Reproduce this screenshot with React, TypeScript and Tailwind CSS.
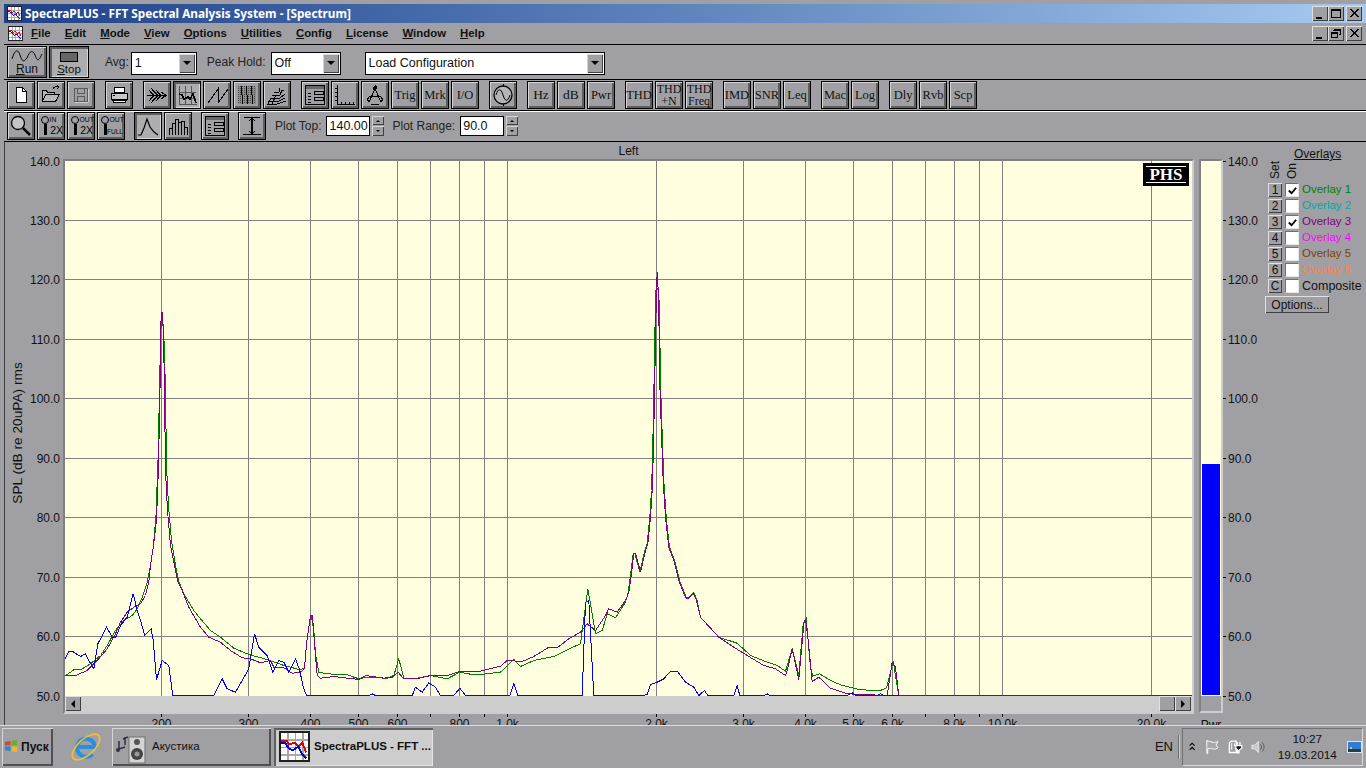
import type { ReactNode } from 'react';

const FACE = 'bg-[#a0a0a4]';
const RAISED = 'border border-black bg-[#a0a0a4] shadow-[inset_1px_1px_0_#d6d6d6,inset_-2px_-2px_0_#5e5e5e]';
const PRESSED = 'border border-black bg-[#adadb0] shadow-[inset_2px_2px_0_#5e5e5e,inset_-1px_-1px_0_#d6d6d6]';

type P = [number, number];
const z4 = (a: P[]): P[] => a.map(([x, y]) => [x / 3, 580 + y / 3]);
const z5 = (a: P[]): P[] => a.map(([x, y]) => [480 + x / 3, 580 + y / 3]);
const z8 = (a: P[]): P[] => a.map(([x, y]) => [600 + x / 3, 260 + y / 3]);
const line = (a: P[]) => a.map(([x, y]) => `${x.toFixed(1)},${y.toFixed(1)}`).join(' ');

const peak2: P[] = [[85, 995], [92, 945], [100, 880], [105, 878], [120, 935], [135, 870], [142, 850], [150, 770], [155, 690], [158, 590], [162, 410], [165, 230], [168, 90], [170, 35], [172, 60], [175, 150], [178, 370], [183, 520], [188, 660], [195, 770], [205, 860], [220, 900], [235, 960], [255, 1010], [262, 1015], [278, 997], [288, 1020]];
// green sits a hair outside the purple on the skirts, and tops out lower
const peak2Green: P[] = peak2.map(([x, y]): P => [x < 170 ? x - 2 : x + 2, Math.max(y, 85)]);

const blue: P[] = [
  ...z4([[192, 238], [205, 212], [215, 212], [240, 228], [255, 220], [268, 245], [280, 265], [292, 190], [300, 175], [318, 140], [335, 170], [345, 172], [360, 135], [380, 110], [398, 40], [410, 90], [420, 120], [433, 165], [452, 145], [458, 180], [468, 297], [485, 240], [505, 255], [517, 345], [640, 345], [665, 295], [680, 325], [705, 335], [725, 300], [745, 265], [762, 160], [775, 200], [800, 225], [817, 275], [835, 240], [850, 245], [865, 275], [885, 235], [898, 270], [908, 320], [918, 345], [1105, 345], [1115, 340], [1125, 345], [1235, 345], [1245, 320], [1265, 335], [1285, 307], [1305, 320], [1320, 345], [1360, 345], [1378, 323], [1395, 345]]),
  ...z5([[88, 345], [100, 310], [112, 345], [305, 345], [315, 65], [325, 60], [340, 345], [485, 345], [500, 342], [510, 312], [530, 305], [550, 295], [570, 272], [590, 272], [615, 305], [640, 320], [655, 345], [672, 330], [682, 345], [760, 345], [770, 315], [778, 345], [850, 345], [860, 340], [868, 345], [1100, 345], [1115, 337], [1127, 345], [1190, 345], [1200, 340], [1212, 345], [1255, 345]]),
];

const green: P[] = [
  ...z4([[192, 288], [220, 268], [240, 268], [270, 250], [300, 225], [320, 195], [345, 150], [370, 120], [395, 105], [410, 85], [425, 50], [440, 5]]),
  [150, 565], [153, 545], [155.5, 515], [157.5, 460], [159, 390], [160, 340], [161, 318], [162, 318], [163.5, 340], [165, 390], [166, 465], [168, 505], [171, 540], [175, 565], [178, 580],
  ...z4([[550, 40], [580, 90], [600, 115], [630, 150], [660, 170], [700, 203], [745, 222], [800, 237], [850, 255], [900, 268], [912, 262], [918, 190], [928, 120], [932, 105], [940, 150], [945, 220], [955, 275], [980, 280], [1040, 283], [1075, 295], [1100, 290], [1160, 293], [1180, 285], [1195, 235], [1210, 293], [1250, 293], [1290, 285], [1340, 295], [1378, 275], [1420, 283], [1440, 282]]),
  ...z5([[60, 275], [100, 237], [120, 258], [160, 240], [220, 228], [260, 208], [300, 190], [312, 100], [322, 25], [335, 100], [345, 160], [365, 150], [380, 100], [405, 112], [435, 65]]),
  ...z8(peak2Green),
  ...z5([[660, 110], [715, 170], [770, 188], [810, 225], [860, 245], [890, 255], [915, 272], [935, 205], [955, 285], [968, 130], [977, 115], [990, 260], [997, 287], [1017, 280], [1050, 300], [1080, 313], [1140, 328], [1200, 330], [1218, 322], [1238, 243], [1255, 345]]),
  [1191, 695],
];

const purple: P[] = [
  ...z4([[192, 285], [225, 285], [260, 270], [290, 240], [320, 205], [345, 160], [360, 125], [380, 95], [400, 80], [420, 70], [435, 45], [445, 5]]),
  [150, 565], [153, 545], [156, 520], [158, 465], [159.5, 390], [160, 330], [161, 312], [162, 312], [163, 335], [164, 390], [165, 470], [167, 510], [170, 545], [174, 565], [177, 580],
  ...z4([[545, 30], [565, 80], [600, 140], [625, 170], [660, 185], [690, 210], [725, 232], [750, 235], [780, 247], [810, 240], [820, 260], [850, 262], [875, 278], [900, 275], [912, 265], [918, 190], [930, 105], [936, 105], [942, 190], [950, 285], [960, 293], [1000, 288], [1075, 297], [1095, 285], [1150, 293], [1175, 290], [1193, 275], [1210, 295], [1250, 295], [1290, 285], [1340, 285], [1380, 272], [1440, 272]]),
  ...z5([[60, 257], [80, 240], [125, 243], [160, 228], [205, 200], [230, 202], [265, 175], [300, 155], [320, 130], [345, 150], [375, 105], [385, 85], [410, 95], [435, 60]]),
  ...z8(peak2),
  ...z5([[660, 110], [715, 170], [760, 200], [800, 225], [850, 255], [885, 265], [915, 285], [920, 270], [935, 205], [955, 297], [970, 130], [975, 115], [982, 170], [995, 303], [1015, 290], [1050, 323], [1100, 340], [1220, 345], [1235, 245], [1245, 260], [1255, 345]]),
  [1191, 695],
];

const yTicks: [string, number][] = [['140.0', 161], ['130.0', 220], ['120.0', 279], ['110.0', 339], ['100.0', 398], ['90.0', 458], ['80.0', 517], ['70.0', 577], ['60.0', 636], ['50.0', 696]];
const xGrid = [161, 248, 310, 358, 397, 430, 459, 484, 507, 656, 743, 805, 853, 892, 925, 954, 979, 1002, 1151];
const xLabels: [string, number][] = [['200', 161], ['300', 248], ['400', 310], ['500', 358], ['600', 397], ['800', 459], ['1.0k', 507], ['2.0k', 656], ['3.0k', 743], ['4.0k', 805], ['5.0k', 853], ['6.0k', 892], ['8.0k', 954], ['10.0k', 1002], ['20.0k', 1151]];

function Ico({ children }: { children: ReactNode }) {
  return (
    <svg viewBox="0 0 26 26" className="w-full h-full" fill="none" stroke="#000" strokeWidth="1" shapeRendering="crispEdges">
      {children}
    </svg>
  );
}

const panelIcon = (
  <Ico>
    <rect x="3.5" y="3.5" width="19" height="19" fill="#a0a0a4" />
    <rect x="4" y="4" width="18" height="3" fill="#666" stroke="none" />
    <path d="M12.5 9.5h9v3h-9zM12.5 15.5h9v3h-9zM6 11h3M6 14h3M6 17h3M6 20h3" />
  </Ico>
);

const TxtIco = ({ top, bottom, bottomSize }: { top: string; bottom: string; bottomSize: number }) => (
  <Ico>
    <circle cx="7" cy="7" r="3.5" shapeRendering="auto" />
    <path d="M7 11v11M8 11v11" strokeWidth="1.3" />
    <text x="11.5" y="9" fontSize="6.8" fill="#000" stroke="none" fontFamily="Liberation Sans" shapeRendering="auto">{top}</text>
    <text x="25" y="21" textAnchor="end" fontSize={bottomSize} fill="#000" stroke="none" fontFamily="Liberation Sans" shapeRendering="auto">{bottom}</text>
  </Ico>
);

type Tool = { icon?: ReactNode; text?: string; sub?: string; pressed?: boolean };

const row2: Tool[][] = [
  [
    { icon: <Ico><path d="M8.5 5.5h6l4 4v11h-10z" fill="#fff" /><path d="M14.5 5.5v4h4" /></Ico> },
    { icon: <Ico><path d="M4.5 8.5h4l1 2h7v2h-9l-3 7zM4.5 19.5h13l4-7h-14" fill="#b8b8b8" /><path d="M15 7c1-3 4-3 6-2M19 3l2 2-2 2" /></Ico> },
    { icon: <Ico><g stroke="#5a5a5a"><rect x="6.5" y="6.5" width="13" height="13" /><rect x="9.5" y="6.5" width="7" height="5" /><rect x="9.5" y="14.5" width="7" height="5" /></g><path d="M7 20.5h13M20.5 7v13" stroke="#d0d0d0" /></Ico> },
  ],
  [
    { icon: <Ico><rect x="8.5" y="5.5" width="10" height="5" fill="#fff" /><path d="M5.5 11.5h16v6h-16z" fill="#c8c8c8" /><rect x="7.5" y="17.5" width="12" height="3" fill="#fff" /><path d="M7 13.5h2" /><path d="M6 18h15" strokeWidth="2" /></Ico> },
  ],
  [
    { icon: <Ico><path d="M3 13.5h20M5 8l5 5.5L5 19M7 6l7 7.5L7 21M12 8l5 5.5-5 5.5M17 10l5 3.5-5 3.5" strokeWidth="1.2" /></Ico> },
    { pressed: true, icon: <Ico><path d="M5.5 4v18.5H23M5 10.5h17M5 16.5h17M11.5 4v18M17.5 4v18" stroke="#555" /><path d="M5 12l3 1 2 4 4-2 2 2 3-5 3 9" strokeWidth="1.6" /></Ico> },
    { icon: <Ico><path d="M4 21L14 7v14L24 7" /></Ico> },
    {
      icon: (
        <Ico>
          <defs>
            <pattern id="dither" width="2" height="2" patternUnits="userSpaceOnUse">
              <rect width="2" height="2" fill="#8c8c90" stroke="none" />
              <rect width="1" height="1" fill="#4c4c4c" stroke="none" />
            </pattern>
          </defs>
          <rect x="4" y="4" width="18" height="18" fill="url(#dither)" stroke="none" />
          <path d="M7 4c3 4-2 6 1 9s-2 6 1 9M12 4c3 4-2 6 1 9s-2 6 1 9M17 4c3 4-2 6 1 9s-2 6 1 9" />
        </Ico>
      ),
    },
    { icon: <Ico><path d="M3 22h10l9-3M4 19h11l6-3M6 16h10l5-4M8 13h8l2-5 2 1M10 10h5l1-4M4 22l3-6M8 22l4-9" /></Ico> },
  ],
  [
    { icon: panelIcon },
    { icon: <Ico><path d="M5.5 3v19.5H23M3 6h3M3 10h3M3 14h3M3 18h3M9 20v3M13 20v3M17 20v3M21 20v3" /></Ico> },
    { icon: <Ico><path d="M13 3v4M13 7L7 20M13 7l6 13M8 14h10M7 20c-3-3 0-6 3-6M19 20c3-3 0-6-3-6M9 22c3 1 5 1 8 0" /><circle cx="13" cy="6" r="1.5" fill="#000" /></Ico> },
    { text: 'Trig' },
    { text: 'Mrk' },
    { text: 'I/O' },
  ],
  [
    { icon: <Ico><circle cx="13" cy="13" r="9" fill="#b4b4b6" strokeWidth="1.3" shapeRendering="auto" /><path d="M13 2v2M13 22v2" /><path d="M6 13c2-7 5-7 7 0s5 7 7 0" shapeRendering="auto" /></Ico> },
  ],
  [{ text: 'Hz' }, { text: 'dB' }, { text: 'Pwr' }],
  [{ text: 'THD' }, { text: 'THD', sub: '+N' }, { text: 'THD', sub: 'Freq' }],
  [{ text: 'IMD' }, { text: 'SNR' }, { text: 'Leq' }],
  [{ text: 'Mac' }, { text: 'Log' }],
  [{ text: 'Dly' }, { text: 'Rvb' }, { text: 'Scp' }],
];

const row3: Tool[][] = [
  [
    { icon: <Ico><circle cx="10" cy="10" r="6.5" fill="#c4c4c6" strokeWidth="1.3" shapeRendering="auto" /><path d="M15 15l7 7" strokeWidth="2.5" shapeRendering="auto" /></Ico> },
    { icon: <TxtIco top="IN" bottom="2X" bottomSize={10.5} /> },
    { icon: <TxtIco top="OUT" bottom="2X" bottomSize={10.5} /> },
    { icon: <TxtIco top="OUT" bottom="FULL" bottomSize={6.5} /> },
  ],
  [
    { pressed: true, icon: <Ico><path d="M3 22h3l3-7 3-9 3 8 4 5 4 3" strokeWidth="1.2" shapeRendering="auto" /></Ico> },
    { icon: <Ico><path d="M4 22v-7h3v7M7 22V10h3v12M10 22V6h3v16M13 22V9h3v13M16 22V8h3v14M19 22v-8h3v8" /></Ico> },
  ],
  [{ icon: panelIcon }],
  [
    { icon: <Ico><path d="M5 4.5h16M4 21.5h18M13 5v16M10 8l3-3 3 3M10 18l3 3 3-3" strokeWidth="1.2" /></Ico> },
  ],
];

function ToolBtn({ tool }: { tool: Tool }) {
  return (
    <div className={`w-[28px] h-[28px] flex flex-col items-center justify-center overflow-hidden shrink-0 ${tool.pressed ? PRESSED : RAISED}`}>
      {tool.icon}
      {tool.text && (
        <span className={`[font-family:'Liberation_Serif',serif] text-[#111] whitespace-nowrap ${tool.sub ? 'text-[12px] leading-[12px]' : tool.text.length > 2 ? 'text-[12.5px] leading-[14px]' : 'text-[13.5px] leading-[14px]'}`}>
          {tool.text}
        </span>
      )}
      {tool.sub && <span className="[font-family:'Liberation_Serif',serif] text-[#111] text-[12px] leading-[12px]">{tool.sub}</span>}
    </div>
  );
}

function SpectraIcon({ size }: { size: string }) {
  return (
    <svg viewBox="0 0 16 16" className={size} shapeRendering="crispEdges">
      <rect x="0" y="0" width="16" height="16" fill="#202020" />
      <rect x="1" y="1" width="14" height="14" fill="#fff" />
      <path d="M4.5 1v14M8.5 1v14M12.5 1v14M1 4.5h14M1 8.5h14M1 12.5h14" stroke="#a8a8a8" />
      <path d="M1 5h3l1 2 3-1 2 2 2-2 2 5" stroke="#e00000" fill="none" />
      <path d="M1 6h2l2 3 2 1 3-2 2 4 2 2" stroke="#0000e0" fill="none" />
    </svg>
  );
}

function WinBtn({ kind }: { kind: 'min' | 'max' | 'restore' | 'close' }) {
  return (
    <div className="w-[16px] h-[15px] bg-[#a0a0a4] shadow-[inset_1px_1px_0_#e0e0e0,inset_-1px_-1px_0_#404040]">
      <svg viewBox="0 0 16 15" className="w-full h-full" fill="none" stroke="#000" shapeRendering="crispEdges">
        {kind === 'min' && <path d="M4 11.5h6" strokeWidth="2" />}
        {kind === 'max' && <path d="M3.5 3.5h9v8h-9zM3 4.5h10" />}
        {kind === 'restore' && <path d="M5.5 3.5h7v5h-2M3.5 6.5h6v5h-6zM3 7.5h7M5 4.5h8" />}
        {kind === 'close' && <path d="M4 3l8 8M5 3l8 8M12 3l-8 8M13 3l-8 8" strokeWidth="1.2" />}
      </svg>
    </div>
  );
}

function Select({ text, w }: { text: string; w: string }) {
  return (
    <div className={`${w} h-[23px] border border-black bg-white flex items-center justify-between shrink-0`}>
      <span className="pl-[3px] text-[12.5px] text-[#111]">{text}</span>
      <div className="w-[16px] h-[19px] mr-[1px] bg-[#a0a0a4] shadow-[inset_1px_1px_0_#d6d6d6,inset_-1px_-1px_0_#404040] flex items-center justify-center">
        <div className="w-0 h-0 border-x-[4px] border-x-transparent border-t-[4px] border-t-black" />
      </div>
    </div>
  );
}

function Spin({ text, w }: { text: string; w: string }) {
  return (
    <div className="flex items-center gap-[2px]">
      <div className={`${w} h-[20px] border border-black bg-white flex items-center pl-[2px] text-[12.5px] text-[#111]`}>{text}</div>
      <div className="w-[12px] flex flex-col gap-[1px]">
        <div className="h-[9px] bg-[#a0a0a4] shadow-[inset_1px_1px_0_#d6d6d6,inset_-1px_-1px_0_#404040] flex items-center justify-center">
          <div className="w-0 h-0 border-x-[2px] border-x-transparent border-b-[2px] border-b-black" />
        </div>
        <div className="h-[10px] bg-[#a0a0a4] shadow-[inset_1px_1px_0_#d6d6d6,inset_-1px_-1px_0_#404040] flex items-center justify-center">
          <div className="w-0 h-0 border-x-[2px] border-x-transparent border-t-[2px] border-t-black" />
        </div>
      </div>
    </div>
  );
}

function ScrollBtn({ dir }: { dir: 'l' | 'r' | 'none' }) {
  return (
    <div className="w-[16px] h-[15px] bg-[#a0a0a4] shadow-[inset_1px_1px_0_#e0e0e0,inset_-1px_-1px_0_#404040] flex items-center justify-center">
      {dir === 'l' && <div className="w-0 h-0 border-y-[4px] border-y-transparent border-r-[4px] border-r-black" />}
      {dir === 'r' && <div className="w-0 h-0 border-y-[4px] border-y-transparent border-l-[4px] border-l-black" />}
    </div>
  );
}

function Plot() {
  return (
    <div className="relative w-[1131px] border-2 border-t-[#808080] border-l-[#808080] border-r-[#cdcdcd] border-b-[#cdcdcd] bg-[#cdcdcd]">
      <svg viewBox="65 161 1127 535" className="block w-[1127px] h-[535px] bg-[#ffffe0]" shapeRendering="crispEdges">
        {xGrid.map(x => <line key={x} x1={x + 0.5} x2={x + 0.5} y1="161" y2="696" stroke="#808080" />)}
        {yTicks.slice(1, 9).map(([l, y]) => <line key={l} x1="65" x2="1192" y1={y + 0.5} y2={y + 0.5} stroke="#808080" />)}
        <g transform="translate(0.5 0.5)" fill="none">
          <polyline points={line(green)} stroke="#008000" />
          <polyline points={line(purple)} stroke="#800080" />
          <polyline points={line(blue)} stroke="#0000ff" />
        </g>
      </svg>
      <div className="h-[16px] flex items-start justify-between pr-[1px]">
        <ScrollBtn dir="l" />
        <div className="flex">
          <ScrollBtn dir="none" />
          <ScrollBtn dir="r" />
        </div>
      </div>
      {/* PHS badge */}
      <div className="absolute right-[3px] top-[2px] w-[46px] h-[23px] bg-black flex items-center justify-center">
        <span className="border-y border-white [font-family:'Liberation_Serif',serif] font-bold text-white text-[17px] leading-[15px] px-[3px]">PHS</span>
      </div>
    </div>
  );
}

function Meter() {
  return (
    <div className="w-[24px] h-[554px] border-2 border-t-[#808080] border-l-[#808080] border-r-[#cdcdcd] border-b-[#cdcdcd] flex flex-col">
      <div className="h-[303px] bg-[#ffffe0]" />
      <div className="h-[232px] px-[1px] pb-[1px] bg-[#ffffe0]">
        <div className="h-full bg-[#0000ff]" />
      </div>
    </div>
  );
}

const overlays: [string, string, string, boolean][] = [
  ['1', 'Overlay 1', 'text-[11.5px] text-[#008000]', true],
  ['2', 'Overlay 2', 'text-[11.5px] text-[#00a8a8]', false],
  ['3', 'Overlay 3', 'text-[11.5px] text-[#800080]', true],
  ['4', 'Overlay 4', 'text-[11.5px] text-[#ff00ff]', false],
  ['5', 'Overlay 5', 'text-[11.5px] text-[#804000]', false],
  ['6', 'Overlay 6', 'text-[11.5px] text-[#ff8040]', false],
  ['C', 'Composite', 'text-[12.5px] text-[#111]', false],
];

function OverlayPanel() {
  return (
    <div className="flex-1 pt-[6px] text-[12px] text-[#111]">
      <div className="pl-[29px] leading-[12px] underline">Overlays</div>
      <div className="flex h-[18px] mt-[1px] pl-[5px] gap-[6px] items-end leading-[11px]">
        <span className="[writing-mode:vertical-rl] rotate-180">Set</span>
        <span className="[writing-mode:vertical-rl] rotate-180">On</span>
      </div>
      <div className="mt-[4px] pl-[3px] flex flex-col gap-[2px]">
        {overlays.map(([n, label, color, on]) => (
          <div key={n} className="flex items-center h-[14px]">
            <div className="w-[14px] h-[14px] bg-[#a0a0a4] shadow-[inset_1px_1px_0_#e0e0e0,inset_-1px_-1px_0_#404040] flex items-center justify-center text-[12px] leading-none">{n}</div>
            <div className="ml-[3px] w-[14px] h-[14px] bg-white border border-t-[#707070] border-l-[#707070] border-r-[#e8e8e8] border-b-[#e8e8e8] flex items-center justify-center">
              {on && (
                <svg viewBox="0 0 12 12" className="w-[11px] h-[11px]" fill="none" stroke="#000" strokeWidth="2">
                  <path d="M2 6l3 3 5-6" />
                </svg>
              )}
            </div>
            <span className={`ml-[3px] whitespace-nowrap ${color}`}>{label}</span>
          </div>
        ))}
      </div>
      <div className="mt-[3px] w-[64px] h-[17px] bg-[#a0a0a4] shadow-[inset_1px_1px_0_#e0e0e0,inset_-1px_-1px_0_#404040] flex items-center justify-center">Options...</div>
    </div>
  );
}

function Taskbar() {
  return (
    <div className={`h-[42px] border-t border-[#dcdcdc] ${FACE} flex items-center text-[11.5px] text-[#111]`}>
      <div className="ml-[2px] w-[51px] h-[38px] shadow-[inset_1px_1px_0_#d6d6d6,inset_-2px_-2px_0_#505050] flex items-center pl-[2px] gap-[2px] font-bold text-[12px]">
        <svg viewBox="0 0 16 16" className="w-[15px] h-[15px]">
          <path d="M1 3l6-1v5H1z" fill="#d8482a" />
          <path d="M8 2l6-1v6H8z" fill="#6cab2c" />
          <path d="M1 8h6v5l-6-1z" fill="#2f86d8" />
          <path d="M8 8h6v6l-6-1z" fill="#f0b828" />
        </svg>
        Пуск
      </div>
      <div className="ml-[18px] w-[30px] h-[30px]">
        <svg viewBox="0 0 30 30" className="w-full h-full overflow-visible" fill="none">
          <path d="M6 15h18a9 9 0 1 0-2.5 7" stroke="#2a8fe0" strokeWidth="4" />
          <ellipse cx="15" cy="15" rx="17" ry="8" transform="rotate(-42 15 15)" stroke="#f0c030" strokeWidth="1.6" />
        </svg>
      </div>
      <div className="ml-[11px] w-[159px] h-[38px] shadow-[inset_1px_1px_0_#d6d6d6,inset_-2px_-2px_0_#505050] flex items-center">
        <svg viewBox="0 0 36 36" className="w-[36px] h-[36px] ml-[3px]">
          <path d="M4 20l6-2M8 10l5-2M4 20v-8M10 16V8" stroke="#303040" strokeWidth="1.5" fill="none" />
          <circle cx="3" cy="21" r="2" fill="#303040" />
          <rect x="14" y="8" width="16" height="26" fill="#d4d4d4" stroke="#707070" />
          <circle cx="22" cy="13" r="3" fill="#555" />
          <circle cx="22" cy="25" r="6" fill="#444" />
          <circle cx="22" cy="25" r="2.5" fill="#999" />
        </svg>
        <span className="ml-[1px]">Акустика</span>
      </div>
      <div className="ml-[3px] w-[159px] h-[38px] bg-[#cdcdcd] shadow-[inset_2px_2px_0_#606060,inset_-1px_-1px_0_#e4e4e4] flex items-center pl-[5px]">
        <SpectraIcon size="w-[31px] h-[31px] shrink-0" />
        <span className="ml-[4px] font-bold whitespace-nowrap">SpectraPLUS - FFT ...</span>
      </div>
      <div className="flex-1" />
      <span className="text-[13px]">EN</span>
      <div className="ml-[5px] w-[2px] h-[24px] bg-[#c8c8c8] border-l border-[#707070]" />
      <div className="ml-[2px] mr-[3px] w-[181px] h-[38px] border border-t-[#707070] border-l-[#707070] border-r-[#d8d8d8] border-b-[#d8d8d8] flex items-center">
        <svg viewBox="0 0 10 10" className="ml-[5px] w-[9px] h-[9px]" fill="none" stroke="#000" strokeWidth="1.4">
          <path d="M2 4l3-3 3 3M2 9l3-3 3 3" />
        </svg>
        <svg viewBox="0 0 16 16" className="ml-[9px] w-[16px] h-[16px]" fill="#a8a8ac" stroke="#fff">
          <path d="M2 15V1h1v1c3-1 4 1 6 1s3 0 5-1l-2 4 2 3c-3 2-5 1-6 1s-3-1-5 0v5z" />
        </svg>
        <svg viewBox="0 0 16 16" className="ml-[8px] w-[16px] h-[16px]" fill="none" stroke="#fff" strokeWidth="1.4">
          <path d="M1.5 3.5L4 1.5h5v12.5H1.5z" />
          <path d="M4 4v7M7 4v3" strokeWidth="1" />
          <path d="M10 2.5v4M13 2.5v4" />
          <path d="M8.5 6.5h6.5v2.5l-3 2.5v3h-1.5v-3l-2-2.5z" fill="#111" />
        </svg>
        <svg viewBox="0 0 16 16" className="ml-[8px] w-[16px] h-[16px]" fill="#c8c8c8" stroke="#e8e8e8">
          <path d="M1 6h3l4-4v12l-4-4H1z" />
          <path d="M10 5c2 2 2 4 0 6M12 3c3 3 3 7 0 10" fill="none" stroke="#555" />
        </svg>
        <div className="w-[74px] ml-[8px] flex flex-col items-center text-[11.8px] leading-[16px]">
          <span>10:27</span>
          <span>19.03.2014</span>
        </div>
        <svg viewBox="0 0 16 12" className="ml-[6px] w-[16px] h-[12px]" shapeRendering="crispEdges">
          <rect width="16" height="12" fill="#d8e4f0" />
          <rect x="1" y="1" width="14" height="7" fill="#2f7fd0" />
          <rect x="1" y="8" width="14" height="3" fill="#303840" />
          <rect x="3" y="6" width="2" height="2" fill="#e8c040" />
        </svg>
      </div>
    </div>
  );
}

export default function App() {
  return (
    <div className={`w-[1366px] h-[768px] overflow-hidden flex flex-col pt-[4px] ${FACE} text-[#111] [font-family:'Liberation_Sans',sans-serif]`}>
      <div className="ml-[4px] flex flex-col">
        {/* Title */}
        <div className="h-[19px] flex items-center bg-gradient-to-r from-[#1f4189] to-[#a6caf0]">
          <SpectraIcon size="ml-[3px] w-[15px] h-[15px]" />
          <span className="ml-[3px] text-white font-bold text-[11.8px] [font-family:'Noto_Sans',sans-serif] whitespace-nowrap">SpectraPLUS - FFT Spectral Analysis System - [Spectrum]</span>
          <div className="ml-auto mr-[4px] flex">
            <WinBtn kind="min" />
            <WinBtn kind="max" />
            <div className="w-[2px]" />
            <WinBtn kind="close" />
          </div>
        </div>
        {/* Menu */}
        <div className="h-[21px] flex items-center">
          <SpectraIcon size="ml-[4px] w-[15px] h-[15px]" />
          <div className="ml-[8px] flex gap-[14px] text-[11.4px] font-bold text-[#111]">
            {['File', 'Edit', 'Mode', 'View', 'Options', 'Utilities', 'Config', 'License', 'Window', 'Help'].map(m => (
              <span key={m}><span className="underline">{m[0]}</span>{m.slice(1)}</span>
            ))}
          </div>
          <div className="ml-auto mr-[4px] flex">
            <WinBtn kind="min" />
            <WinBtn kind="restore" />
            <div className="w-[2px]" />
            <WinBtn kind="close" />
          </div>
        </div>
        {/* Toolbar 1 */}
        <div className="h-[35px] border-t border-black flex items-center pl-[3px] text-[12px]">
          <div className={`w-[40px] h-[32px] flex flex-col items-center ${RAISED}`}>
            <svg viewBox="0 0 32 12" className="w-[32px] h-[12px] mt-[3px] shrink-0" fill="none" stroke="#000">
              <path d="M1 9c3-10 6-10 8-4s3 8 7 3c3-8 6-8 8-3s3 8 7-1" />
            </svg>
            <span className="mt-[1px] leading-[13px]"><span className="underline">R</span>un</span>
          </div>
          <div className={`ml-[2px] w-[40px] h-[32px] flex flex-col items-center ${PRESSED}`}>
            <div className="w-[18px] h-[10px] mt-[5px] bg-[#666] border border-black shrink-0" />
            <span className="mt-[1px] leading-[13px] text-[11.5px]"><span className="underline">S</span>top</span>
          </div>
          <span className="ml-[16px] text-[#222]">Avg:</span>
          <div className="ml-[2px] mt-[2px]"><Select text="1" w="w-[66px]" /></div>
          <span className="ml-[10px] text-[#222]">Peak Hold:</span>
          <div className="ml-[5px] mt-[2px]"><Select text="Off" w="w-[70px]" /></div>
          <div className="ml-[24px] mt-[2px]"><Select text="Load Configuration" w="w-[240px]" /></div>
        </div>
        {/* Toolbar 2 */}
        <div className="h-[31px] border-t border-black flex items-center pl-[3px] gap-[10px]">
          {row2.map((g, i) => (
            <div key={i} className="flex gap-[2px]">
              {g.map((t, j) => <ToolBtn key={j} tool={t} />)}
            </div>
          ))}
        </div>
        {/* Toolbar 3 */}
        <div className="h-[32px] border-y border-black shadow-[inset_0_1px_0_#fff] flex items-center pl-[3px] gap-[9px] text-[12px] text-[#222]">
          {row3.map((g, i) => (
            <div key={i} className="flex gap-[2px]">
              {g.map((t, j) => <ToolBtn key={j} tool={t} />)}
            </div>
          ))}
          <div className="flex items-center gap-[5px]">
            <span>Plot Top:</span>
            <Spin text="140.00" w="w-[44px]" />
          </div>
          <div className="flex items-center gap-[5px] -ml-[1px]">
            <span>Plot Range:</span>
            <Spin text="90.0" w="w-[44px]" />
          </div>
        </div>
      </div>

      {/* Chart area */}
      <div className="ml-[4px] h-[583px] border-l border-[#404040] flex overflow-hidden text-[12px]">
        <div className="w-[1189px] shrink-0 flex flex-col">
          <div className="h-[17px] pl-[58px] flex items-center justify-center leading-none">Left</div>
          <div className="flex">
            <svg viewBox="5 159 58 555" className="w-[58px] h-[555px] shrink-0 overflow-visible" fill="#111" fontSize="12" fontFamily="Liberation Sans">
              <text transform="translate(22 433) rotate(-90)" textAnchor="middle" fontSize="13.7">SPL (dB re 20uPA) rms</text>
              {yTicks.map(([l, y]) => <text key={l} x="60" y={y + 4.5} textAnchor="end">{l}</text>)}
            </svg>
            <Plot />
          </div>
          <svg viewBox="63 714 1131 11" className="ml-[58px] w-[1131px] h-[11px]" fill="#111" fontSize="12" fontFamily="Liberation Sans">
            {xGrid.map(x => <line key={x} x1={x + 0.5} x2={x + 0.5} y1="714" y2="717" stroke="#000" shapeRendering="crispEdges" />)}
            {xLabels.map(([l, x]) => <text key={l} x={x + 0.5} y="727.5" textAnchor="middle">{l}</text>)}
          </svg>
        </div>
        <div className="w-[5px] shrink-0" />
        <div className="shrink-0 pt-[17px]">
          <Meter />
          <div className="pt-[5px] text-center leading-[14px] h-[12px] overflow-hidden">Pwr</div>
        </div>
        <svg viewBox="1223 142 42 583" className="w-[42px] h-[583px] shrink-0" fill="#111" fontSize="12" fontFamily="Liberation Sans">
          {yTicks.map(([l, y]) => (
            <g key={l}>
              <line x1="1223" x2="1226" y1={y + 0.5} y2={y + 0.5} stroke="#000" shapeRendering="crispEdges" />
              <text x="1228" y={y + 4.5}>{l}</text>
            </g>
          ))}
        </svg>
        <OverlayPanel />
      </div>
      <Taskbar />
    </div>
  );
}
